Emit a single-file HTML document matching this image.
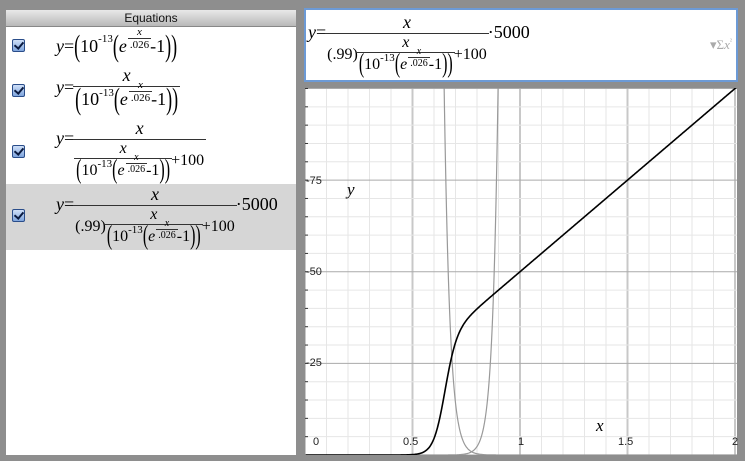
<!DOCTYPE html>
<html><head><style>
body{margin:0;width:745px;height:461px;background:#8e8e8e;position:relative;overflow:hidden;font-family:"Liberation Serif",serif;}
#left{position:absolute;left:6px;top:10px;width:290px;height:445px;background:#fff;}
#hdr{height:16px;background:linear-gradient(#e8e8e8,#b8b8b8);border-bottom:1px solid #888;text-align:center;font:12px "Liberation Sans",sans-serif;line-height:16px;color:#111}
.row{position:absolute;left:0;width:290px}
.cb{position:absolute;left:6px;width:11px;height:11px;border:1px solid #2a4d8a;background:linear-gradient(#cfe0f8,#7fa5dd);border-radius:2px}
.cb:after{content:"";position:absolute;left:3px;top:0px;width:4px;height:7px;border:solid #0a1a40;border-width:0 2px 2px 0;transform:rotate(40deg)}
.eq{position:absolute;left:50px;font-size:18px;white-space:nowrap;display:flex;align-items:center}
.fr{display:inline-flex;flex-direction:column;align-items:center;vertical-align:middle;margin:0 1px}
.fr>.n{border-bottom:1px solid #333;padding:0 2px;text-align:center;width:100%}
.fr>.d{text-align:center;width:100%;display:flex;justify-content:center;align-items:center}
i{font-style:italic}
.P{display:inline-block;transform:scaleY(1.7);font-weight:100}
.s{font-size:11px;position:relative;top:-7px}
.sm{font-size:11px}
.tiny{font-size:10px}
.ef{margin-left:3px}
#top{position:absolute;left:304px;top:8px;width:430px;height:70px;background:#fff;border:2px solid #6c9ad6}
#graph{position:absolute;left:305px;top:88px;width:432px;height:367px;background:#fff}
.lbl{position:absolute;font:11px "Liberation Sans",sans-serif;color:#222}
</style></head><body>
<div id="left"><div id="hdr">Equations</div>
<div class="row" style="top:17px;height:38px"><div class="cb" style="top:12px"></div>
<div class="eq" style="top:0;height:38px"><i>y</i>=<span class="P">(</span>10<span class="s">-13</span><span class="P">(</span><i>e</i><span class="fr sm ef" style="position:relative;top:-8px"><span class="n"><i>x</i></span><span class="d">.026</span></span> -1<span class="P">)</span><span class="P">)</span></div></div>
<div class="row" style="top:55px;height:55px"><div class="cb" style="top:19px"></div>
<div class="eq" style="top:0;height:55px;align-items:flex-start"><i style="margin-top:12px">y</i><span style="margin-top:12px">=</span><span class="fr"><span class="n"><i>x</i></span><span class="d"><span class="P">(</span>10<span class="s">-13</span><span class="P">(</span><i>e</i><span class="fr sm ef" style="position:relative;top:-8px"><span class="n"><i>x</i></span><span class="d">.026</span></span> -1<span class="P">)</span><span class="P">)</span></span></span></div></div>
<div class="row" style="top:108px;height:66px"><div class="cb" style="top:27px"></div>
<div class="eq" style="top:0;align-items:flex-start"><i style="margin-top:10px">y</i><span style="margin-top:10px">=</span><span class="fr"><span class="n"><i>x</i></span><span class="d" style="font-size:16px"><span class="fr"><span class="n"><i>x</i></span><span class="d"><span class="P">(</span>10<span class="s">-13</span><span class="P">(</span><i>e</i><span class="fr tiny ef" style="position:relative;top:-7px"><span class="n"><i>x</i></span><span class="d">.026</span></span> -1<span class="P">)</span><span class="P">)</span></span></span>+100</span></span></div></div>
<div class="row" style="top:174px;height:66px;background:#d6d6d6"><div class="cb" style="top:25px"></div>
<div class="eq" style="top:0;align-items:flex-start"><i style="margin-top:10px">y</i><span style="margin-top:10px">=</span><span class="fr"><span class="n"><i>x</i></span><span class="d" style="font-size:16px">(.99) <span class="fr"><span class="n"><i>x</i></span><span class="d"><span class="P">(</span>10<span class="s">-13</span><span class="P">(</span><i>e</i><span class="fr tiny ef" style="position:relative;top:-7px"><span class="n"><i>x</i></span><span class="d">.026</span></span> -1<span class="P">)</span><span class="P">)</span></span></span>+100</span></span><span style="margin-top:10px">·5000</span></div></div>
</div>
<div id="top"><div class="eq" style="left:2px;top:2px;align-items:flex-start"><i style="margin-top:10px">y</i><span style="margin-top:10px">=</span><span class="fr"><span class="n"><i>x</i></span><span class="d" style="font-size:16px">(.99) <span class="fr"><span class="n"><i>x</i></span><span class="d"><span class="P">(</span>10<span class="s">-13</span><span class="P">(</span><i>e</i><span class="fr tiny ef" style="position:relative;top:-7px"><span class="n"><i>x</i></span><span class="d">.026</span></span> -1<span class="P">)</span><span class="P">)</span></span></span>+100</span></span><span style="margin-top:10px">·5000</span></div>
<div style="position:absolute;right:4px;top:27px;color:#aaa;font-size:13px">▾Σ<i>x</i><sup style="font-size:7px">²</sup></div></div>
<div id="graph"><svg id="g" width="432" height="367"></svg>
<div class="lbl" style="left:1px;top:87px">-75</div>
<div class="lbl" style="left:1px;top:178px">-50</div>
<div class="lbl" style="left:1px;top:269px">-25</div>
<div class="lbl" style="left:8px;top:348px">0</div>
<div class="lbl" style="left:98px;top:348px">0.5</div>
<div class="lbl" style="left:213px;top:348px">1</div>
<div class="lbl" style="left:313px;top:348px">1.5</div>
<div class="lbl" style="left:427px;top:348px">2</div>
<div style="position:absolute;left:42px;top:92px;font-size:17px"><i>y</i></div>
<div style="position:absolute;left:291px;top:328px;font-size:17px"><i>x</i></div>
</div>
<script>
var s='',W=432,H=367,X0=0,sx=215,sy=3.665,Y0=367;
function px(x){return X0+x*sx}function py(y){return Y0-y*sy}
for(var i=0;i<=20;i++){var x=px(i/10);var c=(i%5==0)?'#c8c8c8':'#e6e6e6';var w=(i%5==0)?2:1;s+='<line x1="'+x+'" y1="0" x2="'+x+'" y2="'+H+'" stroke="'+c+'" stroke-width="'+w+'"/>';}
for(var j=0;j<=20;j++){var y=py(j*5);var c=(j%5==0)?'#aaa':'#e6e6e6';s+='<line x1="0" y1="'+y+'" x2="'+W+'" y2="'+y+'" stroke="'+c+'"/>';s+='<line x1="0" y1="'+y+'" x2="3" y2="'+y+'" stroke="#333"/>';}
function I(x){return 1e-13*(Math.exp(x/.026)-1)}
function path(f,col,wd){var d='',st=false;for(var p=1;p<=W;p+=0.5){var x=p/sx,y=f(x);var Y=py(y);if(!isFinite(Y)||Y<-50||Y>H+50){st=false;continue}d+=(st?'L':'M')+p.toFixed(1)+' '+Y.toFixed(1);st=true}s+='<path d="'+d+'" fill="none" stroke="'+col+'" stroke-width="'+wd+'"/>'}
path(I,'#999',1.2);path(function(x){return x/I(x)},'#999',1.2);
path(function(x){return x/(0.99*x/I(x)+100)*5000},'#000',1.6);
document.getElementById('g').innerHTML=s;
</script>
</body></html>
